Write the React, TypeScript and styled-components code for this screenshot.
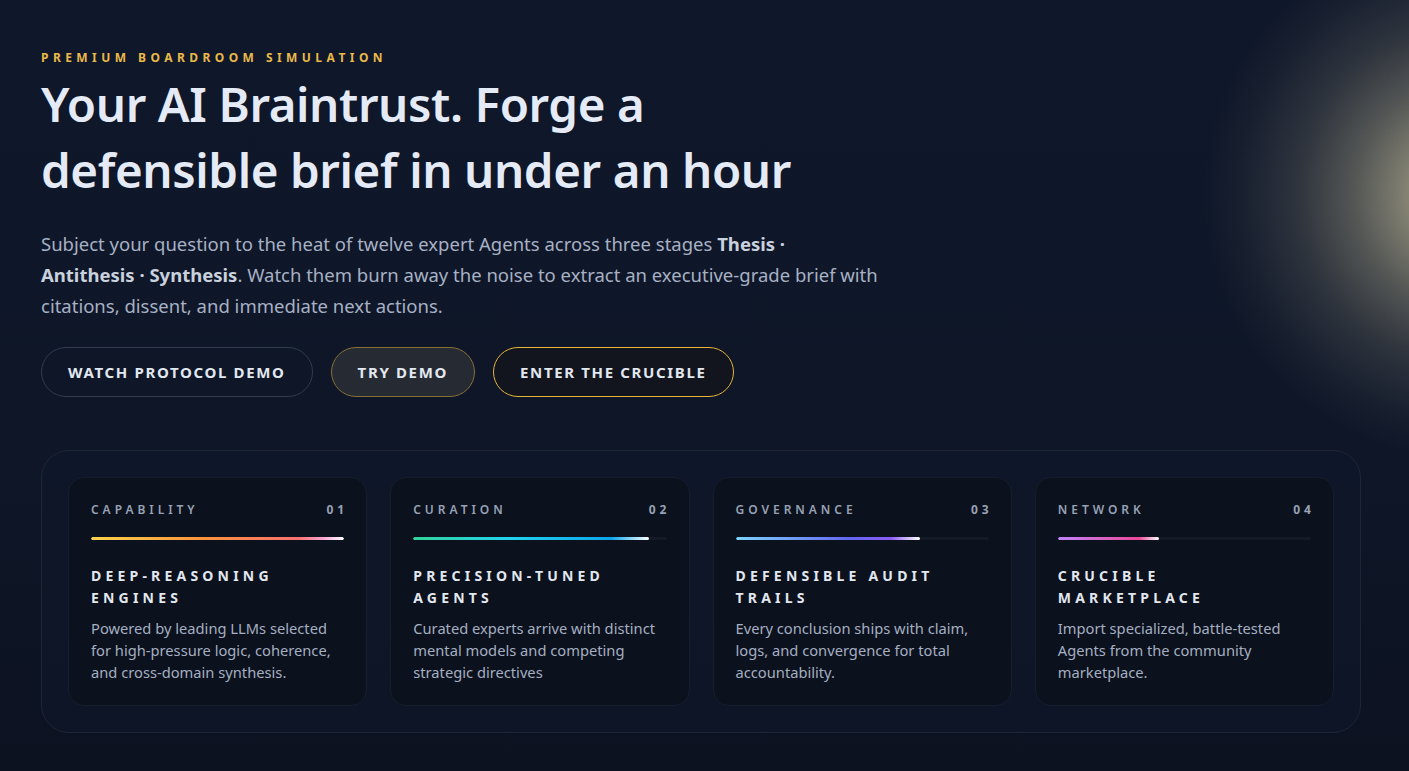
import styled, { createGlobalStyle } from "styled-components";

type Tone = "amber" | "teal" | "indigo" | "violet";

interface IFeature {
  label: string;
  num: string;
  title: string;
  desc: string;
  fill: number;
  tone: Tone;
}

const features: IFeature[] = [
  {
    label: "Capability",
    num: "01",
    title: "Deep-Reasoning Engines",
    desc: "Powered by leading LLMs selected for high-pressure logic, coherence, and cross-domain synthesis.",
    fill: 100,
    tone: "amber",
  },
  {
    label: "Curation",
    num: "02",
    title: "Precision-Tuned Agents",
    desc: "Curated experts arrive with distinct mental models and competing strategic directives",
    fill: 93,
    tone: "teal",
  },
  {
    label: "Governance",
    num: "03",
    title: "Defensible Audit Trails",
    desc: "Every conclusion ships with claim, logs, and convergence for total accountability.",
    fill: 73,
    tone: "indigo",
  },
  {
    label: "Network",
    num: "04",
    title: "Crucible Marketplace",
    desc: "Import specialized, battle-tested Agents from the community marketplace.",
    fill: 40,
    tone: "violet",
  },
];

const toneColors: Record<Tone, string> = {
  amber: "#fb923c",
  teal: "#22d3ee",
  indigo: "#6366f1",
  violet: "#d36ad6",
};

const gradients: Record<Tone, string> = {
  amber: "linear-gradient(90deg, #fcd34d 0%, #fb923c 45%, #f87171 82%, #f9a8d4 92%, #ffffff 100%)",
  teal: "linear-gradient(90deg, #34d399 0%, #22d3ee 40%, #0ea5e9 84%, #ffffff 100%)",
  indigo: "linear-gradient(90deg, #7dd3fc 0%, #6366f1 62%, #8b5cf6 84%, #ffffff 100%)",
  violet: "linear-gradient(90deg, #c084fc 0%, #ec4899 80%, #ffffff 100%)",
};

export default function App() {
  return (
    <>
      <GlobalStyle />
      <Page>
        <Hero>
          <Eyebrow>Premium Boardroom Simulation</Eyebrow>
          <Title>
            Your AI Braintrust. Forge a
            <br />
            defensible brief in under an hour
          </Title>
          <Lead>
            Subject your question to the heat of twelve expert Agents across three stages{" "}
            <strong>
              Thesis ·<br />
              Antithesis · Synthesis
            </strong>
            . Watch them burn away the noise to extract an executive-grade brief with citations,
            dissent, and immediate next actions.
          </Lead>
          <Actions>
            <PillButton $variant="ghost">Watch Protocol Demo</PillButton>
            <PillButton $variant="muted">Try Demo</PillButton>
            <PillButton $variant="gold">Enter the Crucible</PillButton>
          </Actions>
        </Hero>

        <Panel>
          {features.map((f) => (
            <Card key={f.num}>
              <CardHead>
                <CardLabel>{f.label}</CardLabel>
                <CardNum>{f.num}</CardNum>
              </CardHead>
              <Track>
                <Fill $tone={f.tone} style={{ width: `${f.fill}%` }} />
              </Track>
              <CardTitle>{f.title}</CardTitle>
              <CardDesc>{f.desc}</CardDesc>
            </Card>
          ))}
        </Panel>
      </Page>
    </>
  );
}

const GlobalStyle = createGlobalStyle`
  * {
    box-sizing: border-box;
  }

  html, body {
    margin: 0;
    padding: 0;
    background: #0e1526;
  }

  body {
    font-family: "Noto Sans", "Open Sans", "Liberation Sans", sans-serif;
    color: #e2e8f0;
  }
`;

const Page = styled.div`
  min-height: 771px;
  padding: 50px 48px 38px 41px;
  background:
    radial-gradient(
      circle at 1468px 195px,
      rgba(222, 214, 176, 0.76) 0px,
      rgba(216, 208, 168, 0.58) 60px,
      rgba(216, 208, 168, 0.34) 115px,
      rgba(216, 208, 168, 0.16) 170px,
      rgba(216, 208, 168, 0.05) 225px,
      rgba(216, 208, 168, 0) 265px
    ),
    linear-gradient(180deg, #0f172a 0%, #0e1628 60%, #0c1220 100%);
`;

const Hero = styled.section`
  display: flex;
  flex-direction: column;
  align-items: flex-start;
`;

const Eyebrow = styled.p`
  margin: 0;
  font-size: 12px;
  line-height: 16px;
  font-weight: 700;
  letter-spacing: 0.37em;
  text-transform: uppercase;
  color: #e9b949;
`;

const Title = styled.h1`
  margin: 5px 0 0;
  font-size: 47.5px;
  line-height: 66px;
  font-weight: 600;
  letter-spacing: -0.4px;
  color: #e5ebf6;
`;

const Lead = styled.p`
  margin: 25px 0 0;
  max-width: 870px;
  font-size: 18.5px;
  line-height: 31px;
  color: #a7b1c4;

  strong {
    font-weight: 700;
    color: #c9d1de;
  }
`;

const Actions = styled.div`
  display: flex;
  gap: 18px;
  margin-top: 26px;
`;

const variants = {
  ghost: { bg: "transparent", border: "#323b4d" },
  muted: { bg: "#262a33", border: "#8a6f35" },
  gold: { bg: "#12151d", border: "#e6b43a" },
};

const PillButton = styled.button<{ $variant: keyof typeof variants }>`
  height: 50px;
  padding: 0 26px;
  border-radius: 999px;
  border: 1px solid ${(p) => variants[p.$variant].border};
  background: ${(p) => variants[p.$variant].bg};
  color: #e2e8f0;
  font-family: inherit;
  font-size: 15px;
  font-weight: 700;
  letter-spacing: 0.11em;
  text-transform: uppercase;
  cursor: pointer;
`;

const Panel = styled.div`
  margin-top: 53px;
  width: 1320px;
  padding: 26px;
  display: grid;
  grid-template-columns: repeat(4, 1fr);
  gap: 23px;
  border: 1px solid #1d2637;
  border-radius: 28px;
  background: rgba(15, 23, 41, 0.6);
`;

const Card = styled.div`
  height: 229px;
  padding: 24px 22px 20px 22px;
  border: 1px solid #161e2d;
  border-radius: 16px;
  background: #0b111d;
  display: flex;
  flex-direction: column;
`;

const CardHead = styled.div`
  display: flex;
  justify-content: space-between;
  align-items: center;
  font-size: 12px;
  line-height: 16px;
  letter-spacing: 0.33em;
  color: #98a2b5;
  text-transform: uppercase;
`;

const CardLabel = styled.span`
  font-weight: 600;
`;

const CardNum = styled.span`
  font-weight: 700;
  margin-right: -0.33em;
`;

const Track = styled.div`
  margin-top: 19px;
  height: 3px;
  flex-shrink: 0;
  border-radius: 2px;
  background-color: rgba(148, 163, 184, 0.07);
  overflow: hidden;
`;

const Fill = styled.div<{ $tone: Tone }>`
  height: 3px;
  border-radius: 2px;
  background-color: ${(p) => toneColors[p.$tone]};
  background-image: ${(p) => gradients[p.$tone]};
`;

const CardTitle = styled.h3`
  margin: 25px 0 0;
  font-size: 14px;
  line-height: 22px;
  font-weight: 700;
  letter-spacing: 0.3em;
  text-transform: uppercase;
  color: #e2e8f0;
`;

const CardDesc = styled.p`
  margin: 8px 0 0;
  font-size: 14.7px;
  line-height: 22px;
  color: #a5afc1;
`;
